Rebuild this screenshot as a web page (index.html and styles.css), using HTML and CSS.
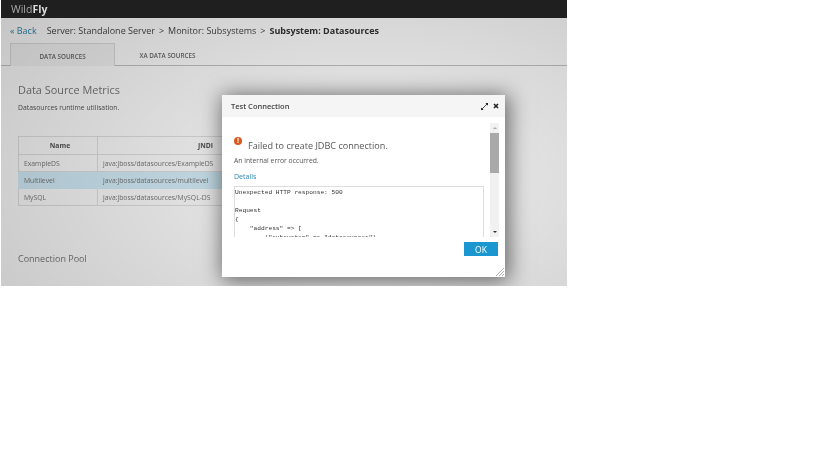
FILE: index.html
```html
<!DOCTYPE html>
<html lang="en">
<head>
    <meta charset="UTF-8">
    <title>WildFly - Datasources</title>
    <link rel="stylesheet" href="styles.css">
</head>
<body>

    <div class="console">
        <header class="topbar">
            <span class="logo">Wild<b>Fly</b></span>
        </header>

        <nav class="breadcrumb">
            <a class="back">&laquo; Back</a>
            <span>Server: Standalone Server</span>
            <span class="sep">&gt;</span>
            <span>Monitor: Subsystems</span>
            <span class="sep">&gt;</span>
            <strong>Subsystem: Datasources</strong>
        </nav>

        <div class="tabs">
            <div class="tab active">DATA SOURCES</div>
            <div class="tab">XA DATA SOURCES</div>
        </div>

        <main class="content">
            <h2>Data Source Metrics</h2>
            <p class="hint">Datasources runtime utilisation.</p>

            <table class="grid">
                <thead>
                    <tr><th class="col-name">Name</th><th class="col-jndi">JNDI</th></tr>
                </thead>
                <tbody>
                    <tr><td>ExampleDS</td><td>java:jboss/datasources/ExampleDS</td></tr>
                    <tr class="selected"><td>Multilevel</td><td>java:jboss/datasources/multilevel</td></tr>
                    <tr><td>MySQL</td><td>java:jboss/datasources/MySQL-DS</td></tr>
                </tbody>
            </table>

            <h2 class="pool">Connection Pool</h2>
        </main>

        <div class="shade"></div>

        <section class="dialog">
            <div class="dialog-head">
                <span>Test Connection</span>
                <span class="dialog-tools">
                    <svg width="7" height="7" viewBox="0 0 8 8"><path d="M1 7L7 1" stroke="#333" stroke-width="1"/><path d="M0 8V5L3 8zM8 0V3L5 0z" fill="#222"/></svg>
                    <svg width="6" height="6" viewBox="0 0 6 6"><path d="M1 1L5 5M5 1L1 5" stroke="#222" stroke-width="1.6"/></svg>
                </span>
            </div>

            <div class="dialog-body">
                <div class="dialog-scroll">
                    <div class="message">
                        <span class="alert-icon">!</span>
                        <span class="message-title">Failed to create JDBC connection.</span>
                    </div>
                    <p class="message-text">An internal error occurred.</p>
                    <a class="details">Details</a>
                    <pre class="log">Unexpected HTTP response: 500

Request
{
    "address" =&gt; [
        ("subsystem" =&gt; "datasources"),</pre>
                </div>
                <div class="scrollbar">
                    <span class="arrow up"></span>
                    <span class="thumb"></span>
                    <span class="arrow down"></span>
                </div>
            </div>

            <div class="dialog-foot">
                <button class="ok">OK</button>
            </div>

            <svg class="grip" width="8" height="8" viewBox="0 0 8 8"><path d="M0 8L8 0M3 8L8 3M6 8L8 6" stroke="#999" stroke-width="0.8"/></svg>
        </section>
    </div>

</body>
</html>
```

FILE: styles.css
```css
/* General */
body {
    margin: 0;
    background-color: #fff;
    font-family: "Open Sans", sans-serif;
    color: #555;
}

.console {
    position: relative;
    width: 566px;
    height: 286px;
    margin-left: 1px;
    overflow: hidden;
    background-color: #fff;
    filter: blur(0.4px);
}

/* Top bar */
.topbar {
    height: 18px;
    background-color: #1f1f1f;
    padding-left: 10px;
    line-height: 15px;
}

.logo {
    font-size: 10.5px;
    color: #aaa;
}

.logo b {
    color: #ddd;
}

/* Breadcrumb */
.breadcrumb {
    display: flex;
    align-items: center;
    height: 25px;
    padding-left: 9px;
    gap: 4px;
    font-size: 9px;
    color: #444;
}

.back {
    color: #2c87b0;
    margin-right: 6px;
}

.breadcrumb strong {
    font-weight: 700;
    color: #333;
}

/* Tabs */
.tabs {
    display: flex;
    height: 22px;
    padding-left: 9px;
    border-bottom: 1px solid #c4c4c4;
}

.tab {
    box-sizing: border-box;
    width: 105px;
    line-height: 25px;
    text-align: center;
    font-size: 6.3px;
    font-weight: 600;
    color: #666;
}

.tab.active {
    background-color: #f6f6f6;
    border: 1px solid #ddd;
    border-bottom: 0;
    height: 23px;
}

/* Content */
.content {
    padding: 16px 17px;
}

h2 {
    margin: 0;
    font-size: 10.9px;
    font-weight: 400;
    color: #777;
}

.hint {
    margin: 6px 0 0;
    font-size: 6.8px;
    color: #555;
}

.grid {
    margin-top: 24px;
    border-collapse: collapse;
    font-size: 6.8px;
    color: #777;
}

.grid th, .grid td {
    border: 1px solid #e2e2e2;
    text-align: left;
    padding: 0 5px;
    height: 16px;
}

.grid th {
    height: 17px;
    text-align: center;
    color: #555;
}

.grid .col-name {
    width: 64px;
    padding-left: 9px;
}

.col-jndi {
    width: 205px;
}

.grid .selected td {
    background-color: #d6f0fc;
    border-color: #d6f0fc;
}

.pool {
    margin-top: 46px;
    font-size: 9px;
}

/* Overlay */
.shade {
    position: absolute;
    left: 0;
    top: 18px;
    right: 0;
    bottom: 0;
    background: radial-gradient(ellipse 450px 260px at 65% 60%, rgba(0, 0, 0, 0.06), rgba(0, 0, 0, 0.22));
}

/* Dialog */
.dialog {
    position: absolute;
    left: 221px;
    top: 95px;
    width: 283px;
    height: 182px;
    display: flex;
    flex-direction: column;
    background-color: #fff;
    box-shadow: 2px 2px 20px 2px rgba(0, 0, 0, 0.55);
}

.dialog-head {
    display: flex;
    justify-content: space-between;
    align-items: center;
    height: 22px;
    padding: 0 6px 0 9px;
    background-color: #f5f5f5;
    font-size: 7.5px;
    font-weight: 600;
    color: #444;
}

.dialog-tools {
    display: flex;
    align-items: center;
    gap: 5px;
}

.dialog-body {
    display: flex;
    height: 114px;
    margin-top: 6px;
    padding: 0 6px 0 12px;
}

.dialog-scroll {
    flex: 1;
    overflow: hidden;
}

.message {
    display: flex;
    align-items: center;
    gap: 6px;
    margin-top: 16px;
}

.alert-icon {
    width: 8px;
    height: 8px;
    margin-top: -10px;
    border-radius: 50%;
    background-color: #d9581e;
    color: #fff;
    font-size: 7px;
    font-weight: 700;
    line-height: 8px;
    text-align: center;
}

.message-title {
    font-size: 9.1px;
    color: #555;
}

.message-text {
    margin: 4px 0 0;
    font-size: 6.8px;
    color: #555;
}

.details {
    display: block;
    margin-top: 7px;
    font-size: 7px;
    color: #2c87b0;
}

.log {
    margin: 5px 6px 0 0;
    padding: 1px 0 0;
    height: 60px;
    overflow: hidden;
    border: 1px solid #ddd;
    border-bottom: 0;
    font-family: "Liberation Mono", monospace;
    font-size: 6.2px;
    line-height: 9px;
    color: #333;
}

.scrollbar {
    display: flex;
    flex-direction: column;
    align-items: center;
    width: 9px;
    background-color: #f1f1f1;
}

.thumb {
    width: 100%;
    height: 40px;
    margin-top: 4px;
    background-color: #a9a9a9;
}

.arrow {
    width: 0;
    height: 0;
    border-left: 2px solid transparent;
    border-right: 2px solid transparent;
}

.arrow.up {
    margin-top: 4px;
    border-bottom: 2px solid #aaa;
}

.arrow.down {
    margin-top: auto;
    margin-bottom: 4px;
    border-top: 2px solid #333;
}

.dialog-foot {
    display: flex;
    justify-content: flex-end;
    padding: 5px 7px 0 0;
}

.ok {
    width: 34px;
    height: 14px;
    padding: 0;
    border: 0;
    background-color: #1b96d0;
    color: #fff;
    font-family: inherit;
    font-size: 8.5px;
}

.grip {
    position: absolute;
    right: 1px;
    bottom: 1px;
}
```
